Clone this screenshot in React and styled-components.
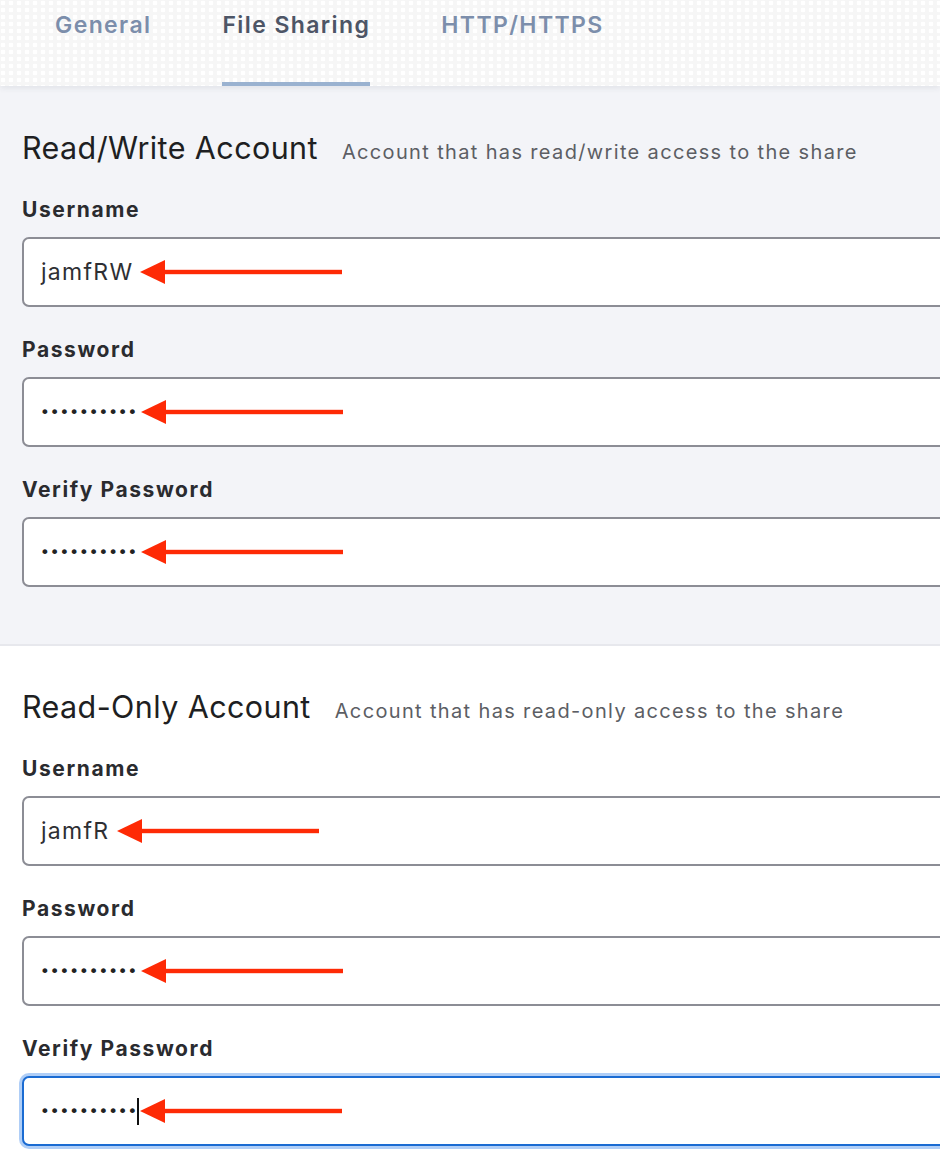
import React from "react";
import styled, { createGlobalStyle } from "styled-components";

const GlobalStyle = createGlobalStyle`
  html, body {
    margin: 0;
    padding: 0;
    overflow: hidden;
    background: #ffffff;
  }
  body {
    font-family: Inter, "Open Sans", "Liberation Sans", sans-serif;
    -webkit-font-smoothing: antialiased;
  }
`;

const Page = styled.div`
  width: 940px;
  overflow: hidden;
`;

const TabBar = styled.nav`
  position: relative;
  z-index: 1;
  display: flex;
  gap: 71px;
  height: 86px;
  padding-left: 55px;
  background-color: #f6f6f6;
  background-image: radial-gradient(circle at 3px 3px, #ffffff 2.2px, transparent 2.6px);
  background-size: 8px 7px;
  box-shadow: 0 2px 6px rgba(40, 50, 70, 0.09);
`;

const Tab = styled.div`
  display: flex;
  align-items: flex-start;
  padding-top: 11px;
  box-sizing: border-box;
  font-size: 23px;
  font-weight: 600;
  letter-spacing: 1.4px;
  color: ${(p) => (p.$active ? "#4d5566" : "#7c8eab")};
  border-bottom: 4px solid ${(p) => (p.$active ? "#9ab2d0" : "transparent")};
`;

const Section = styled.section`
  display: flex;
  flex-direction: column;
  gap: 31px;
  padding: ${(p) => (p.$first ? "44px 0 57px 22px" : "43px 0 40px 22px")};
  background: ${(p) => (p.$first ? "#f3f4f8" : "#ffffff")};
  border-bottom: ${(p) => (p.$first ? "2px solid #e7e8ed" : "none")};
`;

const HeadingRow = styled.div`
  display: flex;
  align-items: baseline;
  gap: 24px;
  height: 36px;
  margin-bottom: 1px;
`;

const Title = styled.h2`
  margin: 0;
  font-size: 30.5px;
  font-weight: 400;
  line-height: 36px;
  letter-spacing: 0.4px;
  color: #1e1f22;
`;

const Subtitle = styled.span`
  font-size: 20px;
  color: #5c5e64;
  letter-spacing: 1.35px;
`;

const Group = styled.div`
  display: flex;
  flex-direction: column;
  gap: 15px;
`;

const Label = styled.label`
  font-size: 21px;
  font-weight: 700;
  line-height: 24px;
  color: #2a2b2f;
  letter-spacing: 1.6px;
`;

const Field = styled.div`
  display: flex;
  align-items: center;
  height: 70px;
  width: 1000px;
  box-sizing: border-box;
  padding-left: 17px;
  background: #ffffff;
  border: 2px solid ${(p) => (p.$focused ? "#1a6bd2" : "#8c8d95")};
  border-radius: 7px;
  box-shadow: ${(p) => (p.$focused ? "0 0 0 3px rgba(110, 165, 240, 0.55)" : "none")};
`;

const Value = styled.span`
  font-size: 23px;
  color: #2e2f33;
  letter-spacing: 1.3px;
`;

const Dots = styled.span`
  font-family: "DejaVu Sans", sans-serif;
  font-size: 16.5px;
  letter-spacing: 0;
  color: #222;
  margin-left: -1px;
`;

const Caret = styled.span`
  display: inline-block;
  width: 2px;
  height: 27px;
  margin-left: 0;
  background: #111;
`;

const ArrowWrap = styled.span`
  display: flex;
  margin-left: ${(p) => p.$gap}px;
`;

const Arrow = ({ gap }) => (
  <ArrowWrap $gap={gap}>
    <svg width="202" height="26" viewBox="0 0 202 26">
      <polygon points="0,13 25,1 25,25" fill="#fe2a05" />
      <rect x="22" y="10.8" width="180" height="4.4" fill="#fe2a05" />
    </svg>
  </ArrowWrap>
);

const PasswordField = ({ focused }) => (
  <Field $focused={focused}>
    <Dots>••••••••••</Dots>
    {focused && <Caret />}
    <Arrow gap={focused ? 1 : 4} />
  </Field>
);

const AccountSection = ({ first, title, subtitle, user, arrowGap, focusLast }) => (
  <Section $first={first}>
    <HeadingRow>
      <Title>{title}</Title>
      <Subtitle>{subtitle}</Subtitle>
    </HeadingRow>
    <Group>
      <Label>Username</Label>
      <Field>
        <Value>{user}</Value>
        <Arrow gap={arrowGap} />
      </Field>
    </Group>
    <Group>
      <Label>Password</Label>
      <PasswordField />
    </Group>
    <Group>
      <Label>Verify Password</Label>
      <PasswordField focused={focusLast} />
    </Group>
  </Section>
);

export default function App() {
  return (
    <Page>
      <GlobalStyle />
      <TabBar>
        <Tab>General</Tab>
        <Tab $active>File Sharing</Tab>
        <Tab>HTTP/HTTPS</Tab>
      </TabBar>
      <AccountSection
        first
        title="Read/Write Account"
        subtitle="Account that has read/write access to the share"
        user="jamfRW"
        arrowGap={7}
      />
      <AccountSection
        title="Read-Only Account"
        subtitle="Account that has read-only access to the share"
        user="jamfR"
        arrowGap={8}
        focusLast
      />
    </Page>
  );
}
